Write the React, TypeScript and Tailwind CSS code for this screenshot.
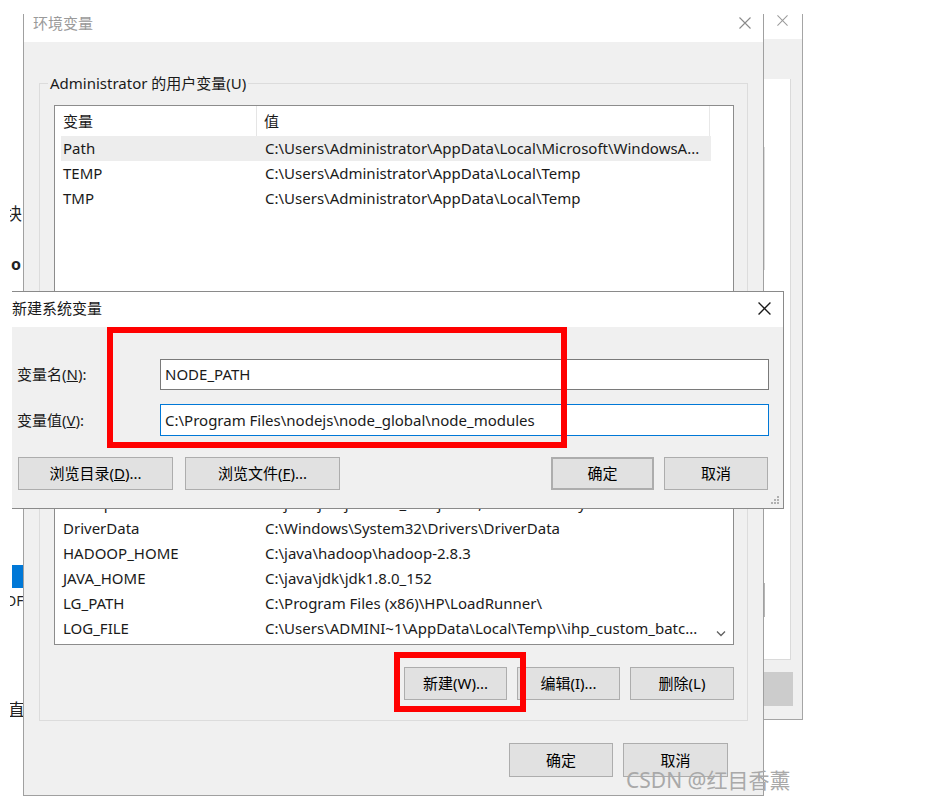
import React from "react";

const FONT = "font-['Noto_Sans','Noto_Sans_CJK_SC',sans-serif]";

function CloseX({ color, size = 12, w = 1.1 }: { color: string; size?: number; w?: number }) {
  return (
    <svg width={size} height={size} viewBox="0 0 12 12">
      <path d="M0.5 0.5L11.5 11.5M11.5 0.5L0.5 11.5" stroke={color} strokeWidth={w} fill="none" />
    </svg>
  );
}

function Btn({ children, className = "" }: { children: React.ReactNode; className?: string }) {
  return (
    <div
      className={`flex items-center justify-center h-[33px] bg-[#e1e1e1] border border-[#adadad] text-[15px] text-black ${className}`}
    >
      {children}
    </div>
  );
}

const userVars: [string, string][] = [
  ["Path", "C:\\Users\\Administrator\\AppData\\Local\\Microsoft\\WindowsA..."],
  ["TEMP", "C:\\Users\\Administrator\\AppData\\Local\\Temp"],
  ["TMP", "C:\\Users\\Administrator\\AppData\\Local\\Temp"],
];

const sysVars: [string, string][] = [
  ["ComSpec", "C:\\java\\jdk\\jdk1.8.0_152\\jre\\lib;C:\\Windows\\system32"],
  ["DriverData", "C:\\Windows\\System32\\Drivers\\DriverData"],
  ["HADOOP_HOME", "C:\\java\\hadoop\\hadoop-2.8.3"],
  ["JAVA_HOME", "C:\\java\\jdk\\jdk1.8.0_152"],
  ["LG_PATH", "C:\\Program Files (x86)\\HP\\LoadRunner\\"],
  ["LOG_FILE", "C:\\Users\\ADMINI~1\\AppData\\Local\\Temp\\\\ihp_custom_batc..."],
];

function Row({ name, value, selected = false }: { name: string; value: string; selected?: boolean }) {
  return (
    <div className={`flex items-center h-[25px] w-[650px] text-[15px] text-[#1a1a1a] ${selected ? "bg-[#ededed]" : ""}`}>
      <div className="w-[204px] pl-[2px] whitespace-nowrap">{name}</div>
      <div className="whitespace-nowrap">{value}</div>
    </div>
  );
}

export default function App() {
  return (
    <div className={`relative w-[940px] h-[804px] bg-white overflow-hidden ${FONT}`}>
      {/* left background window fragments */}
      <div className="absolute left-[10px] top-0 w-[13px] h-[804px] overflow-hidden text-[#222]">
        <span className="absolute -left-[5px] top-[204px] text-[17px] leading-[20px]">块</span>
        <span className="absolute left-[1px] top-[254px] text-[16px] font-bold leading-[20px]">o</span>
        <div className="absolute left-[2px] top-[565px] w-[11px] h-[23px] bg-[#0078d7]" />
        <span className="absolute -left-[4px] top-[593px] text-[14px] leading-[16px]">DF</span>
        <span className="absolute -left-[2px] top-[700px] text-[17px] leading-[20px]">直</span>
      </div>

      {/* right background window */}
      <div className="absolute left-[763px] top-[14px] w-[40px] h-[706px] flex flex-col border-r border-b border-[#a5a5a5] bg-[#f0f0f0]">
        <div className="h-[25px] bg-white flex justify-end pr-[14px] pt-[1px]">
          <CloseX color="#9a9a9a" size={11} />
        </div>
        <div className="mt-[40px] w-[28px] h-[581px] bg-white border-r border-b border-[#dadada] relative">
          <div className="absolute left-[1px] top-[68px] w-[1px] h-[123px] bg-[#dcdcdc]" />
          <div className="absolute left-[0px] top-[504px] w-[2px] h-[34px] bg-[#b5b5b5]" />
        </div>
        <div className="mt-[12px] w-[30px] h-[34px] bg-[#cccccc]" />
      </div>

      {/* main window 环境变量 */}
      <div className="absolute left-[23px] top-[14px] w-[741px] h-[782px] flex flex-col border-l border-r border-b border-[#a0a0a0] bg-[#f0f0f0]">
        <div className="h-[28px] bg-white flex items-start justify-between pl-[9px] pr-[12px] shrink-0">
          <span className="text-[15px] leading-[18px] text-[#9a9a9a]">环境变量</span>
          <div className="pt-[3px]">
            <CloseX color="#8a8a8a" />
          </div>
        </div>
        <div className="flex flex-col px-[15px] pt-[41px]">
          <div className="relative flex flex-col border border-[#dcdcdc] pt-[21px] pb-[20px]">
            <span className="absolute left-[8px] -top-[11px] px-[2px] bg-[#f0f0f0] text-[15px] text-[#1a1a1a] leading-[20px]">
              Administrator 的用户变量(U)
            </span>
            {/* user list */}
            <div className="ml-[14px] w-[680px] h-[200px] border border-[#8c8c8c] bg-white flex flex-col">
              <div className="flex h-[30px] text-[15px] text-[#1a1a1a] items-center">
                <div className="w-[202px] h-full flex items-center pl-[8px] border-r border-[#e5e5e5]">变量</div>
                <div className="w-[453px] h-full flex items-center pl-[7px] border-r border-[#e8e8e8]">值</div>
              </div>
              <div className="flex flex-col pl-[6px]">
                {userVars.map(([n, v], i) => (
                  <Row key={n} name={n} value={v} selected={i === 0} />
                ))}
              </div>
            </div>
            {/* system list */}
            <div className="ml-[14px] mt-[165px] w-[680px] h-[175px] border border-[#8c8c8c] bg-white flex overflow-hidden">
              <div className="flex flex-col justify-end pl-[6px] pb-[3px] w-[656px]">
                {sysVars.map(([n, v]) => (
                  <Row key={n} name={n} value={v} />
                ))}
              </div>
              <div className="flex flex-col justify-end items-center w-[20px] pb-[7px]">
                <svg width="10" height="7" viewBox="0 0 10 7">
                  <path d="M1 1.5L5 5.5L9 1.5" stroke="#606060" strokeWidth="1.3" fill="none" />
                </svg>
              </div>
            </div>
            {/* buttons */}
            <div className="mt-[22px] flex justify-end gap-[10px] pr-[13px]">
              <Btn className="w-[103px] h-[32px]">新建(W)...</Btn>
              <Btn className="w-[103px] h-[32px]">编辑(I)...</Btn>
              <Btn className="w-[104px] h-[32px]">删除(L)</Btn>
            </div>
          </div>
          <div className="mt-[22px] flex justify-end gap-[10px] pr-[20px]">
            <Btn className="w-[104px] h-[34px]">确定</Btn>
            <Btn className="w-[105px] h-[34px]">取消</Btn>
          </div>
        </div>
      </div>

      {/* dialog 新建系统变量 */}
      <div className="absolute left-[12px] top-[291px] w-[772px] h-[218px] flex flex-col border-t border-r border-b border-[#8a8a8a] bg-[#f0f0f0]">
        <div className="h-[35px] bg-white flex items-center justify-between pr-[12px] pb-[2px] shrink-0">
          <span className="text-[15px] text-[#1a1a1a]">新建系统变量</span>
          <CloseX color="#1a1a1a" size={13} w={1.2} />
        </div>
        <div className="relative flex flex-col pt-[32px]">
          <div className="flex items-center">
            <div className="w-[148px] pl-[5px] text-[15px] text-[#1a1a1a]">
              变量名(<span className="underline">N</span>):
            </div>
            <div className="w-[609px] h-[31px] bg-white border border-[#7a7a7a] flex items-center pl-[4px] text-[15px] text-[#1a1a1a]">
              NODE_PATH
            </div>
          </div>
          <div className="flex items-center mt-[14px]">
            <div className="w-[148px] pl-[5px] text-[15px] text-[#1a1a1a]">
              变量值(<span className="underline">V</span>):
            </div>
            <div className="w-[609px] h-[32px] bg-white border border-[#0078d7] flex items-center pl-[4px] text-[15px] text-[#1a1a1a]">
              C:\Program Files\nodejs\node_global\node_modules
            </div>
          </div>
          <div className="flex items-center mt-[21px] pl-[6px] pr-[15px]">
            <Btn className="w-[155px]">
              浏览目录(<span className="underline">D</span>)...
            </Btn>
            <Btn className="w-[155px] ml-[12px]">
              浏览文件(<span className="underline">F</span>)...
            </Btn>
            <div className="flex-1" />
            <Btn className="w-[103px] border-2 border-[#0078d7]">确定</Btn>
            <Btn className="w-[104px] ml-[10px]">取消</Btn>
          </div>
        </div>
        <svg className="absolute right-[4px] bottom-[4px]" width="9" height="9" viewBox="0 0 9 9">
          <rect x="7" y="1" width="2" height="2" fill="#b0b0b0" />
          <rect x="4" y="4" width="2" height="2" fill="#b0b0b0" />
          <rect x="7" y="4" width="2" height="2" fill="#b0b0b0" />
          <rect x="1" y="7" width="2" height="2" fill="#b0b0b0" />
          <rect x="4" y="7" width="2" height="2" fill="#b0b0b0" />
          <rect x="7" y="7" width="2" height="2" fill="#b0b0b0" />
        </svg>
      </div>

      {/* red highlight boxes */}
      <div className="absolute left-[107px] top-[327px] w-[460px] h-[121px] border-[6px] border-[#ff0000]" />
      <div className="absolute left-[394px] top-[652px] w-[132px] h-[60px] border-[6px] border-[#ff0000]" />

      {/* watermark */}
      <div className="absolute left-[626px] top-[766px] text-[21px] leading-[28px] text-[#a9a9a9] whitespace-nowrap">
        CSDN @红目香薰
      </div>
    </div>
  );
}
